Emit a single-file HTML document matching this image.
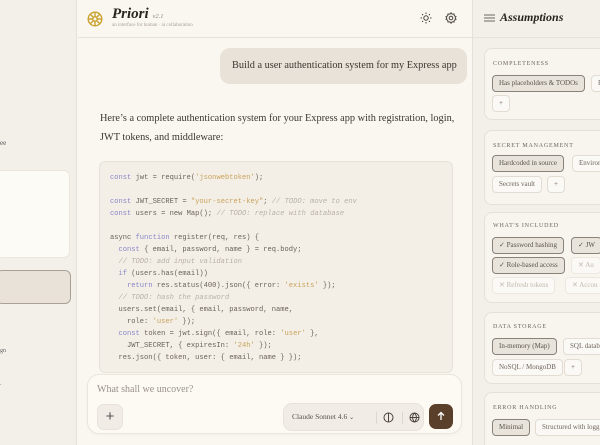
<!DOCTYPE html>
<html><head><meta charset="utf-8"><style>
*{box-sizing:border-box;margin:0;padding:0}
html,body{width:600px;height:445px;overflow:hidden}
body{background:#faf7f1;font-family:"Liberation Serif",serif;color:#3d3630;position:relative}
.a{position:absolute}
.side{left:0;top:0;width:77px;height:445px;background:#f3f0ea;border-right:1px solid #e6e0d6}
.main{left:78px;top:0;width:394px;height:445px;background:#faf7f1}
.right{left:472px;top:0;width:128px;height:445px;background:#f3f0ea;border-left:1px solid #e6e0d6}
.code{font-family:"Liberation Mono",monospace;font-size:7.1px;line-height:12px;color:#6b6259;white-space:pre}
.k{color:#8a86c8}.s{color:#c9a25a}.c{color:#b9b0a4;font-style:italic}
.card{left:484px;width:130px;background:#f8f5ef;border:1px solid #e6e0d6;border-radius:8px}
.lbl{font-size:6px;letter-spacing:.8px;color:#6e665d;position:absolute;left:8px}
.chip{position:absolute;height:17px;border:1px solid #e2dcd2;border-radius:4px;background:#fbf9f5;font-size:7px;color:#6e665d;line-height:15px;padding:0 6px;white-space:nowrap}
.sel{background:#e9e4db;border-color:#8a8279;color:#5a524a}
.dim{color:#c0b8ad;border-color:#ece7df}
</style></head><body>
<div class="a side">
 <div class="a" style="left:0;top:139px;font-size:7px;color:#555">ee</div>
 <div class="a" style="left:-4px;top:170px;width:74px;height:88px;background:#fdfbf6;border:1px solid #ebe5dc;border-radius:6px"></div>
 <div class="a" style="left:-4px;top:270px;width:75px;height:34px;background:#e8e2d9;border:1px solid #aaa196;border-radius:6px"></div>
 <div class="a" style="left:0;top:348px;font-size:6px;color:#666">gn</div>
 <div class="a" style="left:0;top:381px;font-size:6px;color:#666">.</div>
</div>
<div class="a main">
 <div class="a" style="left:0;top:37px;width:394px;height:1px;background:#e8e2d9"></div>
 <svg class="a" style="left:9px;top:11px" width="16" height="16" viewBox="0 0 16 16" fill="none" stroke="#c9a22f" stroke-width="1.4"><circle cx="8" cy="8" r="6.8"/><circle cx="8" cy="8" r="2.2"/><path d="M8 1.2V5.8M8 10.2V14.8M1.2 8H5.8M10.2 8H14.8M3.2 3.2L6.4 6.4M9.6 9.6L12.8 12.8M12.8 3.2L9.6 6.4M6.4 9.6L3.2 12.8"/></svg>
 <div class="a" style="left:34px;top:6px;font-size:15px;font-weight:bold;font-style:italic;color:#2a241f">Priori <span style="font-size:6.5px;font-weight:normal;color:#888">v2.1</span></div>
 <div class="a" style="left:34px;top:23px;font-size:5px;color:#aaa196">an interface for human · ai collaboration</div>
 <svg class="a" style="left:342px;top:12px" width="12" height="12" viewBox="0 0 12 12" fill="none" stroke="#4a423b" stroke-width="1"><circle cx="6" cy="6" r="2.2"/><path d="M6 .5V2M6 10V11.5M.5 6H2M10 6H11.5M2.1 2.1L3.1 3.1M8.9 8.9L9.9 9.9M9.9 2.1L8.9 3.1M3.1 8.9L2.1 9.9"/></svg>
 <svg class="a" style="left:367px;top:12px" width="12" height="12" viewBox="0 0 12 12" fill="none" stroke="#4a423b" stroke-width="1"><circle cx="6" cy="6" r="1.8"/><path d="M6 .8L7.2 2.2L9 1.9L9.3 3.8L11 4.6L10.2 6L11 7.4L9.3 8.2L9 10.1L7.2 9.8L6 11.2L4.8 9.8L3 10.1L2.7 8.2L1 7.4L1.8 6L1 4.6L2.7 3.8L3 1.9L4.8 2.2Z"/></svg>
 <div class="a" style="left:142px;top:48px;width:247px;height:36px;background:#e8e2d9;border-radius:10px;font-size:10.3px;line-height:36px;padding-left:12px;color:#3d3630;white-space:nowrap">Build a user authentication system for my Express app</div>
 <div class="a" style="left:22px;top:110px;width:370px;font-size:10.3px;line-height:18.5px;color:#3d3630">Here’s a complete authentication system for your Express app with registration, login,<br>JWT tokens, and middleware:</div>
 <div class="a" style="left:21px;top:161px;width:354px;height:212px;background:#f3efe7;border:1px solid #e8e2d9;border-radius:6px;overflow:hidden">
<div class="a code" style="left:10px;top:10px"><span class="k">const</span> jwt = require(<span class="s">'jsonwebtoken'</span>);

<span class="k">const</span> JWT_SECRET = <span class="s">"your-secret-key"</span>; <span class="c">// TODO: move to env</span>
<span class="k">const</span> users = new Map(); <span class="c">// TODO: replace with database</span>

async <span class="k">function</span> register(req, res) {
  <span class="k">const</span> { email, password, name } = req.body;
  <span class="c">// TODO: add input validation</span>
  <span class="k">if</span> (users.has(email))
    <span class="k">return</span> res.status(400).json({ error: <span class="s">'exists'</span> });
  <span class="c">// TODO: hash the password</span>
  users.set(email, { email, password, name,
    role: <span class="s">'user'</span> });
  <span class="k">const</span> token = jwt.sign({ email, role: <span class="s">'user'</span> },
    JWT_SECRET, { expiresIn: <span class="s">'24h'</span> });
  res.json({ token, user: { email, name } });</div>
 </div>
 <div class="a" style="left:9px;top:374px;width:375px;height:60px;background:#fdfaf4;border:1px solid #ebe5dc;border-radius:12px;box-shadow:0 1px 3px rgba(0,0,0,.04)">
  <div class="a" style="left:9px;top:9px;font-size:10px;color:#9a9288">What shall we uncover?</div>
  <div class="a" style="left:9px;top:29px;width:26px;height:26px;border-radius:7px;background:#f1ede6;border:1px solid #e8e2d9;text-align:center;line-height:24px;font-size:15px;color:#555;font-family:'Liberation Sans',sans-serif">+</div>
  <div class="a" style="left:195px;top:28px;width:141px;height:28px;border-radius:9px;background:#f1ede6;border:1px solid #e8e2d9">
   <div class="a" style="left:8px;top:8px;font-size:7.5px;color:#5a524a">Claude Sonnet 4.6 <span style="font-size:6px">⌄</span></div>
   <div class="a" style="left:92px;top:8px;width:1px;height:12px;background:#ddd6cc"></div>
   <svg class="a" style="left:99px;top:8px" width="11" height="11" viewBox="0 0 11 11" fill="none" stroke="#4a423b" stroke-width="1"><circle cx="5.5" cy="5.5" r="4.5"/><path d="M5.5 1V10"/></svg>
   <div class="a" style="left:118px;top:8px;width:1px;height:12px;background:#ddd6cc"></div>
   <svg class="a" style="left:125px;top:8px" width="11" height="11" viewBox="0 0 11 11" fill="none" stroke="#4a423b" stroke-width="1"><circle cx="5.5" cy="5.5" r="4.5"/><path d="M1 5.5H10M5.5 1C3 3.5 3 7.5 5.5 10M5.5 1C8 3.5 8 7.5 5.5 10"/></svg>
  </div>
  <div class="a" style="left:341px;top:29px;width:24px;height:25px;border-radius:7px;background:#5a3f2a"><svg class="a" style="left:7px;top:7px" width="10" height="10" viewBox="0 0 10 10" fill="none" stroke="#fff" stroke-width="1.3"><path d="M5 9V1.5M2 4.5L5 1.5L8 4.5"/></svg></div>
 </div>
</div>
<div class="a right">
 <svg class="a" style="left:11px;top:13px" width="11" height="10" viewBox="0 0 11 10" stroke="#6e665d" stroke-width="1"><path d="M0 2H11M0 5H11M0 8H11"/></svg>
 <div class="a" style="left:27px;top:10px;font-size:12px;font-weight:bold;font-style:italic;color:#2a241f">Assumptions</div>
 <div class="a" style="left:0;top:37px;width:128px;height:1px;background:#e8e2d9"></div>
</div>
<div class="a card" style="top:48px;height:72px">
 <div class="lbl" style="top:12px">COMPLETENESS</div>
 <div class="chip sel" style="left:7px;top:26px">Has placeholders &amp; TODOs</div>
 <div class="chip" style="left:106px;top:26px">Fu</div>
 <div class="chip" style="left:7px;top:46px;width:18px;padding:0;text-align:center">+</div>
</div>
<div class="a card" style="top:130px;height:75px">
 <div class="lbl" style="top:12px">SECRET MANAGEMENT</div>
 <div class="chip sel" style="left:7px;top:24px">Hardcoded in source</div>
 <div class="chip" style="left:87px;top:24px">Environ</div>
 <div class="chip" style="left:7px;top:45px">Secrets vault</div>
 <div class="chip" style="left:62px;top:45px;width:18px;padding:0;text-align:center">+</div>
</div>
<div class="a card" style="top:212px;height:91px">
 <div class="lbl" style="top:10px">WHAT'S INCLUDED</div>
 <div class="chip sel" style="left:7px;top:24px">✓ Password hashing</div>
 <div class="chip sel" style="left:86px;top:24px">✓ JW</div>
 <div class="chip sel" style="left:7px;top:44px">✓ Role-based access</div>
 <div class="chip dim" style="left:86px;top:44px">✕ Au</div>
 <div class="chip dim" style="left:7px;top:64px">✕ Refresh tokens</div>
 <div class="chip dim" style="left:80px;top:64px">✕ Accou</div>
</div>
<div class="a card" style="top:312px;height:72px">
 <div class="lbl" style="top:11px">DATA STORAGE</div>
 <div class="chip sel" style="left:7px;top:25px">In-memory (Map)</div>
 <div class="chip" style="left:78px;top:25px">SQL datab</div>
 <div class="chip" style="left:7px;top:46px">NoSQL / MongoDB</div>
 <div class="chip" style="left:79px;top:46px;width:18px;padding:0;text-align:center">+</div>
</div>
<div class="a card" style="top:392px;height:70px">
 <div class="lbl" style="top:12px">ERROR HANDLING</div>
 <div class="chip sel" style="left:7px;top:26px">Minimal</div>
 <div class="chip" style="left:50px;top:26px">Structured with logg</div>
</div>
</body></html>
